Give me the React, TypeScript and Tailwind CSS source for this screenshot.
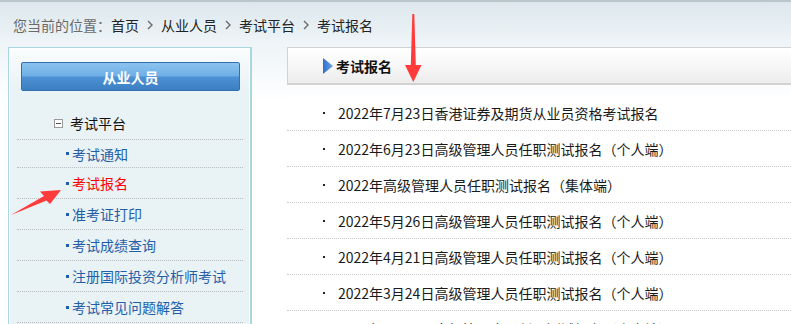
import React from "react";

const font = { fontFamily: '"Noto Sans CJK SC", "Noto Sans", sans-serif' };

function Chevron() {
  return (
    <svg width="6" height="10" viewBox="0 0 6 10" className="mx-[8px]">
      <polyline points="1,1 5,5 1,9" fill="none" stroke="#6b6b6b" strokeWidth="1.4" />
    </svg>
  );
}

const menu = ["考试通知", "考试报名", "准考证打印", "考试成绩查询", "注册国际投资分析师考试", "考试常见问题解答"];

const list = [
  "2022年7月23日香港证券及期货从业员资格考试报名",
  "2022年6月23日高级管理人员任职测试报名（个人端）",
  "2022年高级管理人员任职测试报名（集体端）",
  "2022年5月26日高级管理人员任职测试报名（个人端）",
  "2022年4月21日高级管理人员任职测试报名（个人端）",
  "2022年3月24日高级管理人员任职测试报名（个人端）",
  "2022年2月24日高级管理人员任职测试报名（个人端）",
];

export default function App() {
  return (
    <div
      lang="zh-CN"
      className="relative w-[791px] h-[324px] overflow-hidden border-t-2 border-[#bac4cb] bg-[linear-gradient(to_bottom,#dce7ed_0px,#eef4f7_40px,#f6f9fb_70px,#ffffff_100px)]"
      style={font}
    >
      {/* breadcrumb */}
      <div className="h-[45px] flex items-center pl-[13px] text-[14px] leading-none">
        <span className="text-[#6a6a6a]">您当前的位置：</span>
        <span className="text-[#222]">首页</span>
        <Chevron />
        <span className="text-[#222]">从业人员</span>
        <Chevron />
        <span className="text-[#222]">考试平台</span>
        <Chevron />
        <span className="text-[#222]">考试报名</span>
      </div>

      <div className="flex">
        {/* left panel */}
        <div className="ml-[8px] w-[244px] h-[290px] border border-r-2 border-b-0 border-[#a9d6e1] shadow-[inset_1px_1px_0_#ffffff,inset_-1px_0_0_#ffffff] bg-[linear-gradient(to_bottom,#fbfdfe_0px,#e9f2f5_40px)] pt-[14px]">
          <div className="ml-[12px] w-[219px] h-[29px] rounded-[2px] border border-[#3370ab] bg-[linear-gradient(to_bottom,#8cc4f0_0%,#6eaee6_48%,#4d92d4_52%,#3b7fc3_100%)] flex items-center justify-center text-white text-[14px] font-bold leading-none">
            从业人员
          </div>
          <div className="mt-[16px] ml-[8px] mr-[7px] h-[33px] border-b border-dotted border-[#b9bec2] flex items-center">
            <span className="ml-[37px] w-[9px] h-[9px] border border-[#9a9a9a] bg-white flex items-center justify-center">
              <span className="block w-[5px] h-[1px] bg-[#555]" />
            </span>
            <span className="ml-[7px] text-[14px] text-[#111] leading-none">考试平台</span>
          </div>
          {menu.map((m, i) => (
            <div
              key={m}
              className={`ml-[8px] mr-[7px] border-b border-dotted border-[#b9bec2] flex items-center ${i === 0 ? "h-[28px]" : "h-[31px]"}`}
            >
              <span className="ml-[49px] w-[3px] h-[3px] bg-[#1f5ea8]" />
              <span className={`ml-[3px] text-[14px] leading-none ${i === 1 ? "text-[#ff0000]" : "text-[#1f5ea8]"}`}>{m}</span>
            </div>
          ))}
        </div>

        {/* right column */}
        <div className="ml-[35px] flex-1 mr-[-4px]">
          <div className="h-[38px] border border-b-2 border-[#d2d2d2] bg-[linear-gradient(to_bottom,#ffffff_0%,#f7f7f7_50%,#ececec_100%)] flex items-center">
            <svg width="10" height="16" viewBox="0 0 10 16" className="ml-[35px]">
              <defs>
                <linearGradient id="tri" x1="0" y1="0" x2="1" y2="0">
                  <stop offset="0" stopColor="#2f6fc8" />
                  <stop offset="1" stopColor="#6aa4ea" />
                </linearGradient>
              </defs>
              <polygon points="0,0 10,8 0,16" fill="url(#tri)" />
            </svg>
            <span className="ml-[3px] text-[14px] font-bold text-[#111] leading-none">考试报名</span>
          </div>
          <div className="mt-[10px] bg-white">
            {list.map((t) => (
              <div key={t} className="h-[36px] border-b border-dotted border-[#c8c8c8] flex items-center">
                <span className="ml-[36px] w-[2px] h-[2px] bg-[#222]" />
                <span className="ml-[13px] text-[14px] text-[#1a1a1a] leading-none whitespace-nowrap">{t}</span>
              </div>
            ))}
          </div>
        </div>
      </div>

      {/* annotation arrows */}
      <svg className="absolute left-0 top-0 pointer-events-none" width="791" height="324" viewBox="0 0 791 324">
        <polygon points="11,213 44,194 40,189.5 61,188 50,202 46.5,198.5" fill="#ff3b3b" />
        <polygon points="412.3,12 414.3,12 415.8,63 421.5,63 413.3,80 405,63 410.8,63" fill="#ff3b3b" />
      </svg>
    </div>
  );
}
